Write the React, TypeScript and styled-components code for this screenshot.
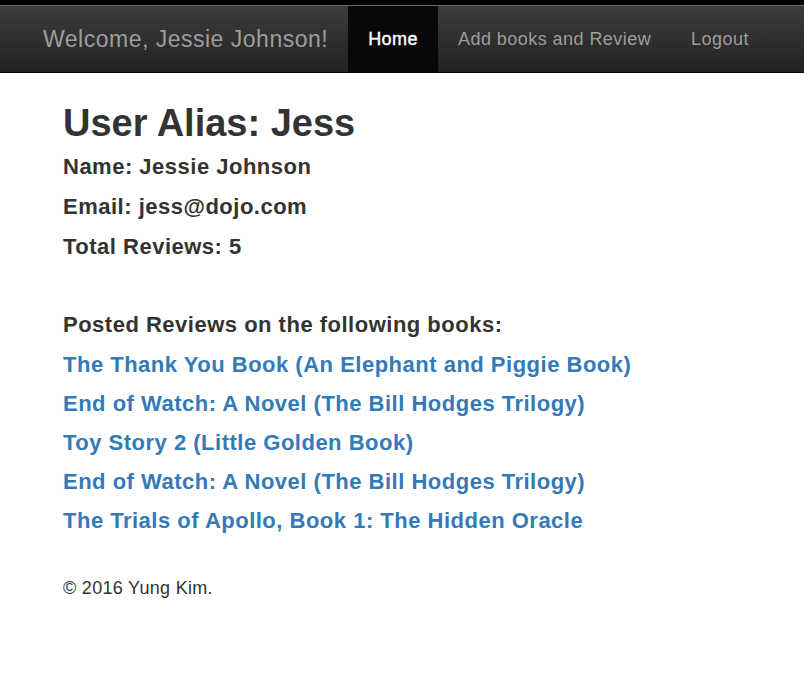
import { FunctionComponent } from "react"
import styled, { createGlobalStyle } from "styled-components"

const GlobalStyle = createGlobalStyle`
  body {
    margin: 0;
    background: #fff;
    font-family: "Liberation Sans", Arial, Helvetica, sans-serif;
    color: #333;
  }
`

const books = [
  "The Thank You Book (An Elephant and Piggie Book)",
  "End of Watch: A Novel (The Bill Hodges Trilogy)",
  "Toy Story 2 (Little Golden Book)",
  "End of Watch: A Novel (The Bill Hodges Trilogy)",
  "The Trials of Apollo, Book 1: The Hidden Oracle",
]

const App: FunctionComponent = () => {
  return (
    <>
      <GlobalStyle />
      <TopStrip />
      <Navbar>
        <Brand href="#">Welcome, Jessie Johnson!</Brand>
        <NavList>
          <NavItem active>
            <a href="#">Home</a>
          </NavItem>
          <NavItem>
            <a href="#">Add books and Review</a>
          </NavItem>
          <NavItem>
            <a href="#">Logout</a>
          </NavItem>
        </NavList>
      </Navbar>
      <Container>
        <Title>User Alias: Jess</Title>
        <Info>Name: Jessie Johnson</Info>
        <Info>Email: jess@dojo.com</Info>
        <Info>Total Reviews: 5</Info>
        <Section>
          <Info>Posted Reviews on the following books:</Info>
          {books.map((b, i) => (
            <BookLink key={i} href="#">
              {b}
            </BookLink>
          ))}
        </Section>
        <Footer>© 2016 Yung Kim.</Footer>
      </Container>
    </>
  )
}

const TopStrip = styled.div`
  height: 5px;
  background: #000;
`

const Navbar = styled.nav`
  display: flex;
  align-items: stretch;
  height: 66px;
  padding-left: 43px;
  background: linear-gradient(to bottom, #3c3c3c 0%, #222 100%);
  border-top: 1px solid #6a6a6a;
  border-bottom: 1px solid #080808;
`

const Brand = styled.a`
  display: flex;
  align-items: center;
  font-size: 23px;
  color: #9d9d9d;
  text-decoration: none;
  margin-right: 20px;
  letter-spacing: 0.5px;
`

const NavList = styled.ul`
  display: flex;
  list-style: none;
  margin: 0;
  padding: 0;
`

const NavItem = styled.li<{ active?: boolean }>`
  display: flex;
  a {
    display: flex;
    align-items: center;
    padding: 0 20px;
    font-size: 18px;
    text-decoration: none;
    color: ${(p) => (p.active ? "#fff" : "#9d9d9d")};
    background: ${(p) => (p.active ? "#080808" : "transparent")};
    letter-spacing: 0.45px;
    -webkit-text-stroke: ${(p) => (p.active ? "0.4px #fff" : "0")};
  }
`

const Container = styled.div`
  padding: 30px 63px 0;
`

const Title = styled.h1`
  margin: 0 0 2px;
  font-size: 38px;
  font-weight: 700;
  line-height: 1.1;
  color: #333;
`

const Info = styled.div`
  font-size: 22px;
  font-weight: 700;
  line-height: 40px;
  color: #333;
  letter-spacing: 0.5px;
`

const Section = styled.div`
  display: flex;
  flex-direction: column;
  margin-top: 38px;
`

const BookLink = styled.a`
  font-size: 22px;
  font-weight: 700;
  line-height: 39px;
  color: #337ab7;
  text-decoration: none;
  letter-spacing: 0.5px;
`

const Footer = styled.footer`
  margin-top: 38px;
  font-size: 18px;
  color: #333;
  letter-spacing: 0.3px;
`

export default App
